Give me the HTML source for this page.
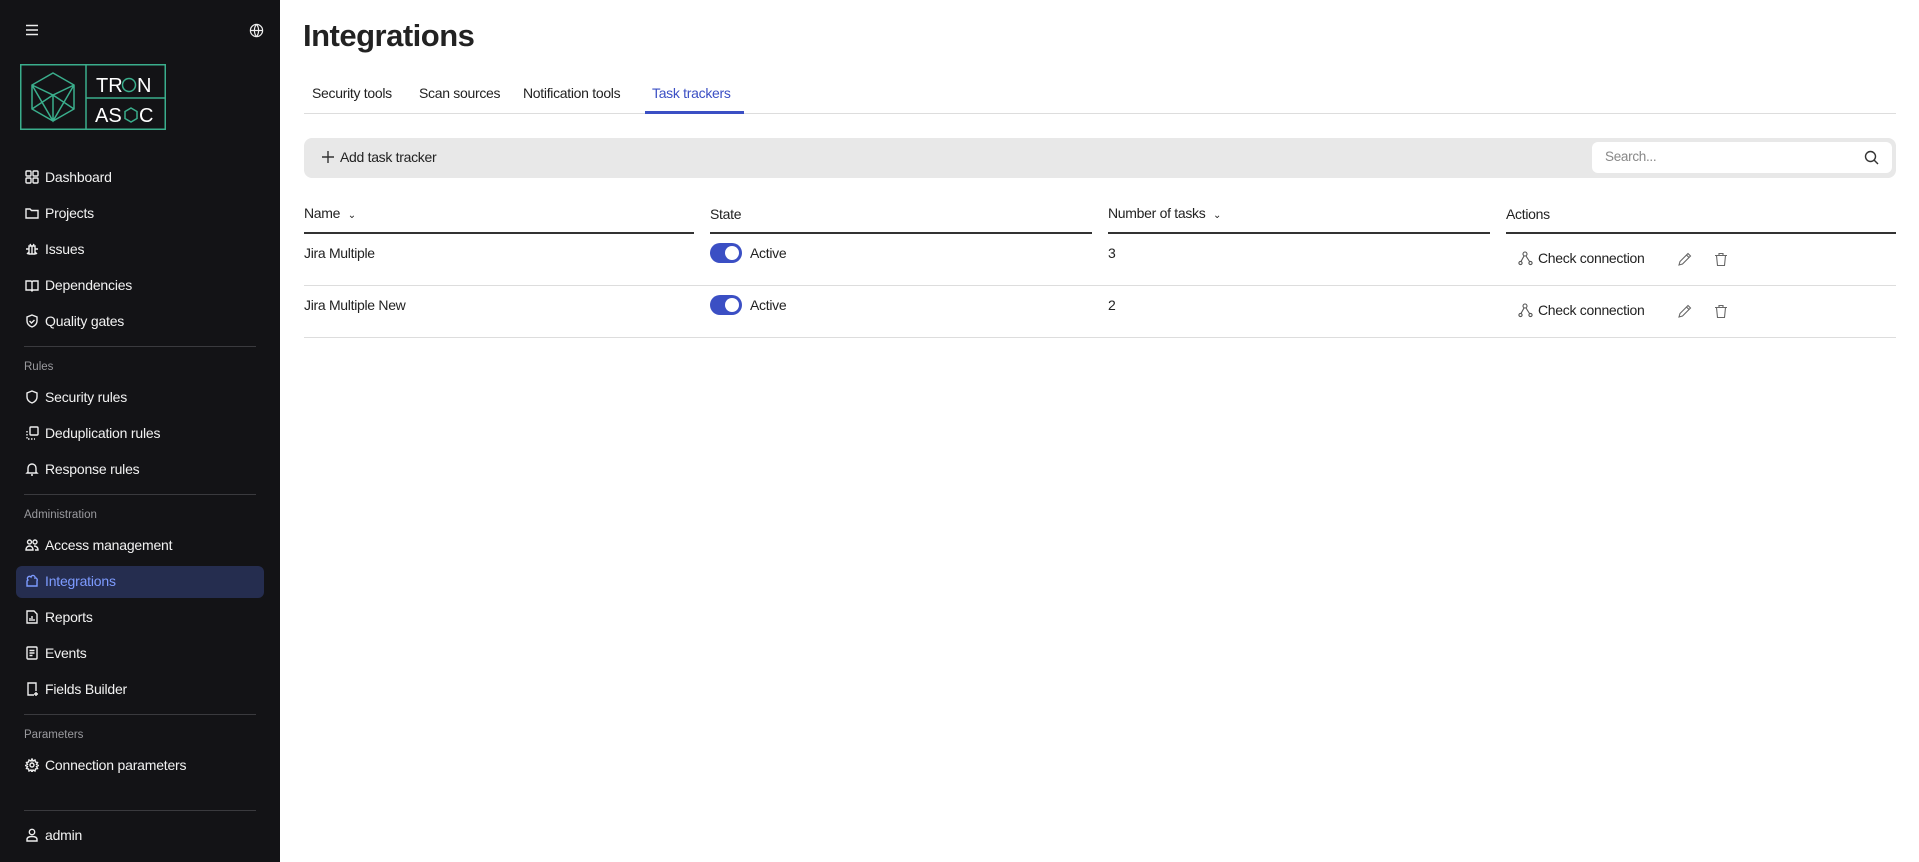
<!DOCTYPE html>
<html><head><meta charset="utf-8"><style>
*{box-sizing:border-box;margin:0;padding:0}
body{width:1919px;height:862px;overflow:hidden;background:#fff;font-family:"Liberation Sans",sans-serif;color:#222;position:relative}
.sb{position:absolute;left:0;top:0;width:280px;height:862px;background:#131316;color:#f2f2f2}
.a{position:absolute}
.it{position:absolute;left:25px;font-size:14px;letter-spacing:-0.2px;display:flex;align-items:center;gap:6px;height:20px;margin-top:-10px}
.it svg{width:14px;height:14px;fill:none;stroke:#eee;stroke-width:1.4}
.sec{position:absolute;left:24px;font-size:11.5px;color:#9a9a9e;margin-top:-7px}
.hr{position:absolute;left:24px;width:232px;height:1px;background:#3a3a3e}
.t{position:absolute;font-size:14px;letter-spacing:-0.3px;white-space:nowrap}
.ln{position:absolute;height:1px;background:#ddd}
.hl{position:absolute;height:1.5px;background:#333}
.tg{position:absolute;width:32px;height:20px;border-radius:10px;background:#3b4fc4}
.tg:after{content:"";position:absolute;right:3px;top:3px;width:14px;height:14px;border-radius:50%;background:#fff}
</style></head><body>
<div class="sb">
<svg class="a" style="left:25px;top:23px" width="14" height="14" viewBox="0 0 14 14" stroke="#eee" stroke-width="1.5"><path d="M1 2.5h12M1 7h12M1 11.5h12"/></svg>
<svg class="a" style="left:249px;top:23px" width="15" height="15" viewBox="0 0 16 16" fill="none" stroke="#eee" stroke-width="1.3"><circle cx="8" cy="8" r="6.5"/><path d="M1.5 8h13M8 1.5c-3 3.5-3 9.5 0 13M8 1.5c3 3.5 3 9.5 0 13"/></svg>
<svg class="a" style="left:20px;top:64px" width="146" height="66" viewBox="0 0 146 66" fill="none" stroke="#3aae8c" stroke-width="1.5">
<rect x="0.75" y="0.75" width="144.5" height="64.5"/><path d="M66 0.75V65M66 34h79"/>
<path d="M33 9l21 12v24l-21 12-21-12V21z M12 21l21 10 21-10M33 31v26M12 21l21 36 21-36M12 45l21-14 21 14"/>
<text x="76" y="28" fill="#fff" stroke="none" font-family="Liberation Sans" font-size="20">TR</text><circle cx="109" cy="21" r="6.5"/><text x="117" y="28" fill="#fff" stroke="none" font-family="Liberation Sans" font-size="20">N</text>
<text x="75" y="58" fill="#fff" stroke="none" font-family="Liberation Sans" font-size="20">AS</text><path d="M111 44l6 3.5v7l-6 3.5-6-3.5v-7z"/><text x="119" y="58" fill="#fff" stroke="none" font-family="Liberation Sans" font-size="20">C</text>
</svg>
<div class="it" style="top:177px"><svg viewBox="0 0 14 14"><rect x="1" y="1" width="5" height="5" rx="1"/><rect x="8" y="1" width="5" height="5" rx="1"/><rect x="1" y="8" width="5" height="5" rx="1"/><rect x="8" y="8" width="5" height="5" rx="1"/></svg>Dashboard</div>
<div class="it" style="top:213px"><svg viewBox="0 0 14 14"><path d="M1 3h4l1.5 1.5H13V12H1z"/></svg>Projects</div>
<div class="it" style="top:249px"><svg viewBox="0 0 14 14"><path d="M4 4h6v8H4zM7 4v8M4 7H1M10 7h3M4 10l-2 2M10 10l2 2M5 2l1 2M9 2l-1 2"/></svg>Issues</div>
<div class="it" style="top:285px"><svg viewBox="0 0 14 14"><path d="M1 3h5l1 1 1-1h5v9H8l-1 1-1-1H1zM7 4v9"/></svg>Dependencies</div>
<div class="it" style="top:321px"><svg viewBox="0 0 14 14"><path d="M7 1l5 2v4c0 3-2.5 5-5 6-2.5-1-5-3-5-6V3zM4.5 7l2 2 3-3"/></svg>Quality gates</div>
<div class="hr" style="top:346px"></div>
<div class="sec" style="top:368px">Rules</div>
<div class="it" style="top:397px"><svg viewBox="0 0 14 14"><path d="M7 1l5 2v4c0 3-2.5 5-5 6-2.5-1-5-3-5-6V3z"/></svg>Security rules</div>
<div class="it" style="top:433px"><svg viewBox="0 0 14 14"><rect x="5" y="1" width="8" height="8" rx="1"/><path d="M2 5v8h8" stroke-dasharray="1.5 1.5"/></svg>Deduplication rules</div>
<div class="it" style="top:469px"><svg viewBox="0 0 14 14"><path d="M3 10V6a4 4 0 018 0v4l1 1H2zM6 13h2"/></svg>Response rules</div>
<div class="hr" style="top:494px"></div>
<div class="sec" style="top:516px">Administration</div>
<div class="it" style="top:545px"><svg viewBox="0 0 14 14"><circle cx="4.5" cy="4" r="2"/><circle cx="10" cy="4" r="2"/><path d="M1 12c0-3 2-4 3.5-4s3.5 1 3.5 4zM9 8c2 0 4 1 4 4h-3"/></svg>Access management</div>
<div class="a" style="left:16px;top:566px;width:248px;height:32px;border-radius:6px;background:#252d4f"></div>
<div class="it" style="top:581px;color:#7d9bff"><svg viewBox="0 0 14 14" style="stroke:#7d9bff"><path d="M3 6a2 2 0 013-3 2 2 0 014 1 2 2 0 012 3v5H2V8a2 2 0 011-2z"/></svg>Integrations</div>
<div class="it" style="top:617px"><svg viewBox="0 0 14 14"><path d="M2 1h7l3 3v9H2zM5 11V8M7 11V6M9 11V9"/></svg>Reports</div>
<div class="it" style="top:653px"><svg viewBox="0 0 14 14"><rect x="2" y="1" width="10" height="12" rx="1"/><path d="M4.5 4.5h5M4.5 7h5M4.5 9.5h3"/></svg>Events</div>
<div class="it" style="top:689px"><svg viewBox="0 0 14 14"><path d="M9 13H3V1h8v8M11 10v4M9 12h4"/></svg>Fields Builder</div>
<div class="hr" style="top:714px"></div>
<div class="sec" style="top:736px">Parameters</div>
<div class="it" style="top:765px"><svg viewBox="0 0 14 14"><circle cx="7" cy="7" r="2"/><path d="M7 1l1 2 2-1 .5 2 2 .5-1 2 2 1-2 1 1 2-2 .5-.5 2-2-1-1 2-1-2-2 1-.5-2-2-.5 1-2-2-1 2-1-1-2 2-.5.5-2 2 1z"/></svg>Connection parameters</div>
<div class="a" style="left:0;top:793px;width:280px;height:6px;overflow:hidden"><div class="it" style="top:4px;margin-top:0"><svg viewBox="0 0 14 14"><circle cx="7" cy="7" r="6"/></svg>About</div></div>
<div class="hr" style="top:810px"></div>
<div class="it" style="top:835px"><svg viewBox="0 0 14 14"><circle cx="7" cy="4" r="2.7"/><path d="M2 13v-1.5C2 9.5 4 8.5 7 8.5s5 1 5 3V13z"/></svg>admin</div>
</div>

<div class="t" style="left:303px;top:18px;font-size:31px;font-weight:bold;letter-spacing:-0.5px;color:#222">Integrations</div>
<div class="t" style="left:312px;top:85px">Security tools</div>
<div class="t" style="left:419px;top:85px">Scan sources</div>
<div class="t" style="left:523px;top:85px">Notification tools</div>
<div class="t" style="left:652px;top:85px;color:#3b4fc4">Task trackers</div>
<div class="ln" style="left:304px;top:113px;width:1592px"></div>
<div class="a" style="left:645px;top:111px;width:99px;height:2.5px;background:#3b4fc4"></div>

<div class="a" style="left:304px;top:138px;width:1592px;height:40px;border-radius:8px;background:#e8e8e8"></div>
<svg class="a" style="left:321px;top:150px" width="14" height="14" viewBox="0 0 14 14" stroke="#333" stroke-width="1.4"><path d="M7 1v12M1 7h12"/></svg>
<div class="t" style="left:340px;top:149px">Add task tracker</div>
<div class="a" style="left:1592px;top:142px;width:300px;height:31px;border-radius:6px;background:#fff"></div>
<div class="t" style="left:1605px;top:149px;font-size:13.5px;color:#888">Search...</div>
<svg class="a" style="left:1864px;top:150px" width="15" height="15" viewBox="0 0 15 15" fill="none" stroke="#333" stroke-width="1.4"><circle cx="6.5" cy="6.5" r="5"/><path d="M10 10l4 4"/></svg>

<div class="t" style="left:304px;top:205px">Name <span style="font-size:10px;margin-left:4px">&#8964;</span></div>
<div class="t" style="left:710px;top:206px">State</div>
<div class="t" style="left:1108px;top:205px">Number of tasks <span style="font-size:10px;margin-left:4px">&#8964;</span></div>
<div class="t" style="left:1506px;top:206px">Actions</div>
<div class="hl" style="left:304px;top:232px;width:390px"></div>
<div class="hl" style="left:710px;top:232px;width:382px"></div>
<div class="hl" style="left:1108px;top:232px;width:382px"></div>
<div class="hl" style="left:1506px;top:232px;width:390px"></div>

<div class="t" style="left:304px;top:245px">Jira Multiple</div>
<div class="tg" style="left:710px;top:243px"></div>
<div class="t" style="left:750px;top:245px">Active</div>
<div class="t" style="left:1108px;top:245px">3</div>
<div class="ln" style="left:304px;top:285px;width:1592px"></div>
<div class="t" style="left:304px;top:297px">Jira Multiple New</div>
<div class="tg" style="left:710px;top:295px"></div>
<div class="t" style="left:750px;top:297px">Active</div>
<div class="t" style="left:1108px;top:297px">2</div>
<div class="ln" style="left:304px;top:337px;width:1592px"></div>

<div class="a" style="left:1518px;top:251px">
<svg class="a" style="left:0;top:0" width="15" height="15" viewBox="0 0 15 15" fill="none" stroke="#555" stroke-width="1.1"><circle cx="7" cy="3" r="2"/><circle cx="2.5" cy="12" r="1.6"/><circle cx="12.5" cy="12" r="1.6"/><path d="M6 5l-3 5.5M8 5l3.5 5.5"/></svg>
<div class="t" style="left:20px;top:-1px">Check connection</div>
<svg class="a" style="left:159px;top:1px" width="15" height="15" viewBox="0 0 15 15" fill="none" stroke="#666" stroke-width="1.1"><path d="M2 13l1-3.5 8-8 2.5 2.5-8 8zM9.5 3l2.5 2.5"/></svg>
<svg class="a" style="left:196px;top:1px" width="14" height="15" viewBox="0 0 14 15" fill="none" stroke="#666" stroke-width="1.1"><path d="M1 3.5h12M5 3.5V1.5h4v2M2.5 3.5l1 10h7l1-10"/></svg>
</div>
<div class="a" style="left:1518px;top:303px">
<svg class="a" style="left:0;top:0" width="15" height="15" viewBox="0 0 15 15" fill="none" stroke="#555" stroke-width="1.1"><circle cx="7" cy="3" r="2"/><circle cx="2.5" cy="12" r="1.6"/><circle cx="12.5" cy="12" r="1.6"/><path d="M6 5l-3 5.5M8 5l3.5 5.5"/></svg>
<div class="t" style="left:20px;top:-1px">Check connection</div>
<svg class="a" style="left:159px;top:1px" width="15" height="15" viewBox="0 0 15 15" fill="none" stroke="#666" stroke-width="1.1"><path d="M2 13l1-3.5 8-8 2.5 2.5-8 8zM9.5 3l2.5 2.5"/></svg>
<svg class="a" style="left:196px;top:1px" width="14" height="15" viewBox="0 0 14 15" fill="none" stroke="#666" stroke-width="1.1"><path d="M1 3.5h12M5 3.5V1.5h4v2M2.5 3.5l1 10h7l1-10"/></svg>
</div>
</body></html>
